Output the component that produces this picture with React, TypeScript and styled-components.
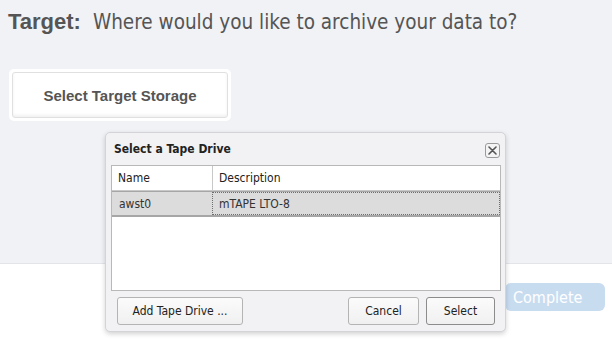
import React from 'react';
import styled, { createGlobalStyle } from 'styled-components';

const GlobalStyle = createGlobalStyle`
  html, body {
    margin: 0;
    padding: 0;
    background: #ffffff;
  }
  body {
    font-family: "Liberation Sans", Arial, sans-serif;
  }
`;

const drives = [{ name: 'awst0', description: 'mTAPE LTO-8' }];

const App: React.FC = () => {
  return (
    <Page>
      <GlobalStyle />
      <TargetPanel>
        <Heading>
          <HeadingLabel>Target:</HeadingLabel>
          <HeadingText>Where would you like to archive your data to?</HeadingText>
        </Heading>
        <StorageButtonFrame>
          <StorageButton>Select Target Storage</StorageButton>
        </StorageButtonFrame>
      </TargetPanel>
      <ActionBar>
        <CompleteButton disabled>Complete</CompleteButton>
      </ActionBar>

      <Dialog>
        <DialogHeader>
          <DialogTitle>Select a Tape Drive</DialogTitle>
          <CloseButton aria-label="Close">
            <svg width="9" height="9" viewBox="0 0 9 9">
              <path d="M1 1 L8 8 M8 1 L1 8" stroke="#555" strokeWidth="1.6" strokeLinecap="round" />
            </svg>
          </CloseButton>
        </DialogHeader>
        <Grid>
          <GridHead>
            <HeadCell $width={100}>Name</HeadCell>
            <HeadCell>Description</HeadCell>
          </GridHead>
          {drives.map((drive, index) => (
            <GridRow key={index} $selected={index === 0}>
              <Cell $width={100}>{drive.name}</Cell>
              <Cell $focused={index === 0}>{drive.description}</Cell>
            </GridRow>
          ))}
        </Grid>
        <DialogFooter>
          <DialogButton $width={126}>Add Tape Drive ...</DialogButton>
          <FooterRight>
            <DialogButton $width={71}>Cancel</DialogButton>
            <DialogButton $width={69} $primary>Select</DialogButton>
          </FooterRight>
        </DialogFooter>
      </Dialog>
    </Page>
  );
};

const Page = styled.div`
  position: relative;
  width: 612px;
  height: 344px;
  overflow: hidden;
  background: #ffffff;
`;

const TargetPanel = styled.div`
  height: 264px;
  box-sizing: border-box;
  padding: 7px 8px 0 8px;
  background: #f1f2f6;
  border-bottom: 1px solid #e2e4ea;
`;

const Heading = styled.div`
  display: flex;
  align-items: baseline;
  gap: 12px;
  color: #555555;
  line-height: 30px;
`;

const HeadingLabel = styled.span`
  font-family: "Liberation Sans", Arial, sans-serif;
  font-weight: bold;
  font-size: 22px;
`;

const HeadingText = styled.span`
  font-family: "DejaVu Sans Condensed", "DejaVu Sans", sans-serif;
  font-size: 20.5px;
`;

const StorageButtonFrame = styled.div`
  margin-top: 32px;
  margin-left: 1px;
  width: 222px;
  height: 52px;
  box-sizing: border-box;
  padding: 3px;
  background: #ffffff;
  border-radius: 5px;
`;

const StorageButton = styled.button`
  width: 100%;
  height: 100%;
  background: #ffffff;
  border: 1px solid #e0e0e0;
  border-radius: 3px;
  box-shadow: inset 0 -2px 3px rgba(0, 0, 0, 0.06);
  color: #555555;
  font-family: "Liberation Sans", Arial, sans-serif;
  font-weight: bold;
  font-size: 15px;
  padding: 0;
`;

const ActionBar = styled.div`
  display: flex;
  justify-content: flex-end;
  padding: 19px 7px 0 0;
`;

const CompleteButton = styled.button`
  width: 100px;
  height: 28px;
  border: none;
  border-radius: 6px;
  background: #c8dcf0;
  color: #ffffff;
  font-family: "DejaVu Sans Condensed", "DejaVu Sans", sans-serif;
  font-size: 16px;
  padding: 0 0 0 8px;
  text-align: left;
`;

const Dialog = styled.div`
  position: absolute;
  left: 105px;
  top: 132px;
  width: 401px;
  height: 200px;
  box-sizing: border-box;
  display: flex;
  flex-direction: column;
  padding: 0 5px;
  background: #f2f2f4;
  border: 1px solid #d4d4d8;
  border-radius: 5px;
  box-shadow: 0 2px 5px rgba(0, 0, 0, 0.18);
  font-family: "DejaVu Sans Condensed", "DejaVu Sans", sans-serif;
  font-size: 12px;
  color: #222222;
`;

const DialogHeader = styled.div`
  height: 32px;
  display: flex;
  align-items: center;
  justify-content: space-between;
  padding: 0 0 0 3px;
`;

const DialogTitle = styled.span`
  font-weight: bold;
  font-size: 12px;
  color: #222222;
`;

const CloseButton = styled.button`
  width: 15px;
  height: 15px;
  margin-top: 2px;
  padding: 0;
  display: flex;
  align-items: center;
  justify-content: center;
  background: #f4f4f4;
  border: 1px solid #9a9a9a;
  border-radius: 3px;
`;

const Grid = styled.div`
  height: 126px;
  box-sizing: border-box;
  background: #ffffff;
  border: 1px solid #b8b8b8;
  margin-right: -1px;
`;

const GridHead = styled.div`
  display: flex;
  height: 24px;
  border-bottom: 1px solid #c8c8c8;
`;

const HeadCell = styled.div<{ $width?: number }>`
  ${(p) => (p.$width ? `width: ${p.$width}px;` : 'flex: 1;')}
  box-sizing: border-box;
  display: flex;
  align-items: center;
  padding-left: 6px;
  & + & {
    border-left: 1px solid #c8c8c8;
  }
`;

const GridRow = styled.div<{ $selected?: boolean }>`
  display: flex;
  height: 23px;
  background: ${(p) => (p.$selected ? '#dcdcdc' : '#ffffff')};
  border-top: 1px solid ${(p) => (p.$selected ? '#a6a6a6' : 'transparent')};
  border-bottom: 2px solid ${(p) => (p.$selected ? '#a6a6a6' : 'transparent')};
`;

const Cell = styled.div<{ $width?: number; $focused?: boolean }>`
  ${(p) => (p.$width ? `width: ${p.$width}px;` : 'flex: 1;')}
  box-sizing: border-box;
  display: flex;
  align-items: center;
  padding-left: 6px;
  color: #333333;
  border: 1px dotted ${(p) => (p.$focused ? '#6e6e6e' : 'transparent')};
`;

const DialogFooter = styled.div`
  flex: 1;
  display: flex;
  align-items: center;
  justify-content: space-between;
  padding: 0 5px 0 6px;
`;

const FooterRight = styled.div`
  display: flex;
  gap: 7px;
`;

const DialogButton = styled.button<{ $width: number; $primary?: boolean }>`
  width: ${(p) => p.$width}px;
  height: 28px;
  padding: 0;
  background: linear-gradient(#fbfbfb, #f0f0f0);
  border: 1px solid ${(p) => (p.$primary ? '#8c8c8c' : '#b4b4b4')};
  border-radius: 3px;
  font-family: "DejaVu Sans Condensed", "DejaVu Sans", sans-serif;
  font-size: 12px;
  color: #222222;
`;

export default App;
